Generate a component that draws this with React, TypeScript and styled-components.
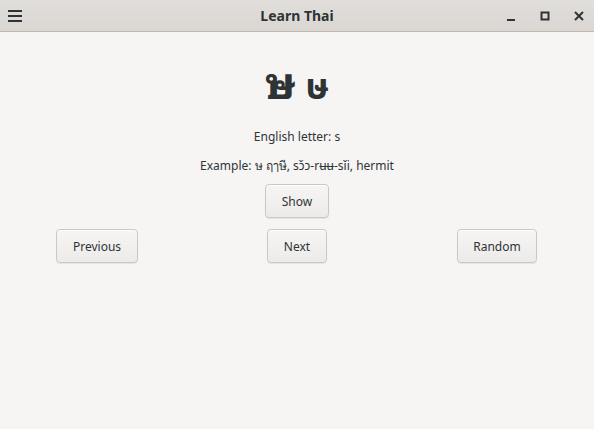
import React from "react";
import styled, { createGlobalStyle } from "styled-components";

const Global = createGlobalStyle`
  html, body { margin: 0; padding: 0; background: #f6f5f4; }
  body { font-family: "Noto Sans", "Open Sans", sans-serif; color: #2e3436; }
`;

const Window = styled.div`
  width: 594px;
  height: 429px;
  display: flex;
  flex-direction: column;
  background: #f6f5f4;
  overflow: hidden;
`;

const HeaderBar = styled.header`
  height: 31px;
  flex: none;
  display: grid;
  grid-template-columns: 1fr auto 1fr;
  align-items: center;
  background: linear-gradient(#e1dedb, #dad6d2);
  border-bottom: 1px solid #bfb8b1;
`;

const Title = styled.div`
  font-weight: bold;
  font-size: 14px;
  color: #2e3436;
`;

const Left = styled.div`
  display: flex;
  padding-left: 8px;
`;

const Right = styled.div`
  display: flex;
  justify-content: flex-end;
  gap: 4px;
`;

const IconBtn = styled.div`
  width: 30px;
  height: 30px;
  display: flex;
  align-items: center;
  justify-content: center;
`;

const Content = styled.main`
  display: flex;
  flex-direction: column;
  align-items: center;
  padding-top: 19px;
`;

const Letter = styled.div`
  display: flex;
  align-items: baseline;
  gap: 10px;
  height: 56px;
  font-weight: bold;
  color: #2e3436;
`;

const Glyph = styled.span<{ $looped?: boolean }>`
  font-size: ${(p) => (p.$looped ? 44 : 35)}px;
  line-height: 56px;
  font-family: ${(p) =>
    p.$looped
      ? `"Noto Sans Thai Looped", "Noto Sans Thai", sans-serif`
      : `"Noto Sans Thai", "Noto Sans", sans-serif`};
`;

const Line = styled.div<{ $mt: number }>`
  font-size: 12px;
  line-height: 16px;
  margin-top: ${(p) => p.$mt}px;
`;

const Button = styled.button<{ $w: number }>`
  font-family: "Noto Sans", sans-serif;
  font-size: 12px;
  color: #2e3436;
  width: ${(p) => p.$w}px;
  height: 34px;
  padding: 0;
  border: 1px solid #cdc7c2;
  border-radius: 4px;
  background: linear-gradient(#f6f5f4, #edebe9);
  box-shadow: inset 0 1px #fff, 0 1px 1px rgba(0,0,0,0.07);
`;

const ShowButton = styled(Button)`
  margin-top: 10px;
`;

const NavRow = styled.div`
  display: grid;
  grid-template-columns: repeat(3, 199px);
  column-gap: 1px;
  justify-content: center;
  justify-items: center;
  width: 596px;
  margin-top: 11px;
`;

export default function App() {
  return (
    <Window>
      <Global />
      <HeaderBar>
        <Left>
          <svg width="14" height="12" viewBox="0 0 14 12">
            <rect x="0" y="0" width="14" height="2" fill="#2e3436" />
            <rect x="0" y="5" width="14" height="2" fill="#2e3436" />
            <rect x="0" y="10" width="14" height="2" fill="#2e3436" />
          </svg>
        </Left>
        <Title>Learn Thai</Title>
        <Right>
          <IconBtn>
            <svg width="10" height="10" viewBox="0 0 10 10">
              <rect x="1" y="8" width="8" height="2" fill="#2e3436" />
            </svg>
          </IconBtn>
          <IconBtn>
            <svg width="10" height="10" viewBox="0 0 10 10">
              <rect x="1.5" y="1.5" width="7" height="7" fill="none" stroke="#2e3436" strokeWidth="2" />
            </svg>
          </IconBtn>
          <IconBtn>
            <svg width="10" height="10" viewBox="0 0 10 10">
              <path d="M1 1 L9 9 M9 1 L1 9" stroke="#2e3436" strokeWidth="2" />
            </svg>
          </IconBtn>
        </Right>
      </HeaderBar>
      <Content>
        <Letter>
          <Glyph $looped>ษ</Glyph>
          <Glyph>ษ</Glyph>
        </Letter>
        <Line $mt={22}>English letter: s</Line>
        <Line $mt={13}>Example: ษ ฤๅษี, sɔ̌ɔ-rʉʉ-sǐi, hermit</Line>
        <ShowButton $w={64}>Show</ShowButton>
        <NavRow>
          <Button $w={82}>Previous</Button>
          <Button $w={60}>Next</Button>
          <Button $w={80}>Random</Button>
        </NavRow>
      </Content>
    </Window>
  );
}
